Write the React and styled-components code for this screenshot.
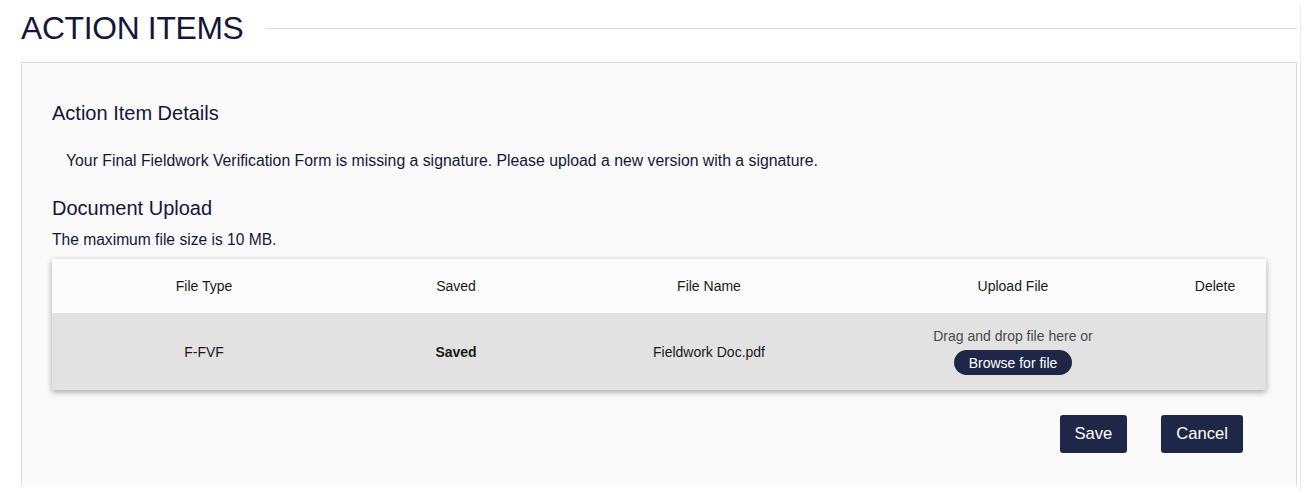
import React from 'react'
import styled, { createGlobalStyle } from 'styled-components'

const GlobalStyle = createGlobalStyle`
  html, body {
    margin: 0;
    padding: 0;
    background: #ffffff;
    font-family: "Liberation Sans", Arial, sans-serif;
  }
`

const Page = styled.div`
  width: 1309px;
  height: 494px;
  box-sizing: border-box;
  padding: 8px 12px 0 21px;
  overflow: hidden;
  position: relative;
`

const EdgeLine = styled.div`
  position: absolute;
  top: 5px;
  bottom: 4px;
  left: 1300px;
  width: 1px;
  background: #ececec;
`

const Header = styled.div`
  display: flex;
  align-items: center;
  gap: 22px;
  height: 40px;
`

const Title = styled.h1`
  margin: 0;
  font-size: 31.8px;
  font-weight: 400;
  color: #15163a;
  letter-spacing: -0.3px;
  white-space: nowrap;
`

const Rule = styled.div`
  flex: 1;
  height: 1px;
  background: #dcdcdc;
  margin-top: 1px;
`

const Card = styled.div`
  margin-top: 14px;
  background: #fafafa;
  border: 1px solid #dcdcdc;
  border-bottom: none;
  height: 424px;
  box-sizing: border-box;
  padding: 37px 30px 0 30px;
`

const SectionTitle = styled.h2`
  margin: 0;
  font-size: 20px;
  font-weight: 400;
  color: #15163a;
  line-height: 26px;
`

const Message = styled.p`
  margin: 25px 0 0 14px;
  font-size: 15.8px;
  color: #15163a;
  line-height: 20px;
`

const Spaced = styled.div`
  margin-top: ${p => p.$top}px;
`

const Note = styled.p`
  margin: 9px 0 0 0;
  font-size: 15.6px;
  color: #15163a;
  line-height: 20px;
`

const Table = styled.div`
  margin-top: 9px;
  width: 1214px;
  box-shadow: 0 2px 6px rgba(0, 0, 0, 0.35);
`

const Row = styled.div`
  display: grid;
  grid-template-columns: 304px 200px 306px 302px 102px;
  height: ${p => p.$h}px;
  background: ${p => p.$bg};
  align-items: center;
`

const Cell = styled.div`
  text-align: center;
  font-size: 14px;
  color: #1a1a1a;
  font-weight: ${p => (p.$bold ? 700 : 400)};
  display: flex;
  flex-direction: column;
  align-items: center;
`

const DropText = styled.span`
  color: #4a4a4a;
  font-size: 14px;
`

const Browse = styled.button`
  margin-top: 6px;
  width: 118px;
  height: 25px;
  border: none;
  border-radius: 13px;
  background: #1e2747;
  color: #fff;
  font-family: inherit;
  font-size: 14px;
  cursor: pointer;
`

const Actions = styled.div`
  display: flex;
  justify-content: flex-end;
  gap: 34px;
  margin-top: 25px;
  padding-right: 23px;
`

const ActionButton = styled.button`
  height: 38px;
  padding: 0 15px;
  border: none;
  border-radius: 3px;
  background: #1e2747;
  color: #fff;
  font-family: inherit;
  font-size: 16.6px;
  cursor: pointer;
`

function App() {
  return (
    <>
      <GlobalStyle />
      <Page>
        <EdgeLine />
        <Header>
          <Title>ACTION ITEMS</Title>
          <Rule />
        </Header>
        <Card>
          <SectionTitle>Action Item Details</SectionTitle>
          <Message>
            Your Final Fieldwork Verification Form is missing a signature. Please upload a new version with a signature.
          </Message>
          <Spaced $top={24}>
            <SectionTitle>Document Upload</SectionTitle>
          </Spaced>
          <Note>The maximum file size is 10 MB.</Note>
          <Table>
            <Row $h={54} $bg="#fcfcfc">
              <Cell>File Type</Cell>
              <Cell>Saved</Cell>
              <Cell>File Name</Cell>
              <Cell>Upload File</Cell>
              <Cell>Delete</Cell>
            </Row>
            <Row $h={77} $bg="#e2e2e2">
              <Cell>F-FVF</Cell>
              <Cell $bold>Saved</Cell>
              <Cell>Fieldwork Doc.pdf</Cell>
              <Cell>
                <DropText>Drag and drop file here or</DropText>
                <Browse>Browse for file</Browse>
              </Cell>
              <Cell />
            </Row>
          </Table>
          <Actions>
            <ActionButton>Save</ActionButton>
            <ActionButton>Cancel</ActionButton>
          </Actions>
        </Card>
      </Page>
    </>
  )
}

export default App
